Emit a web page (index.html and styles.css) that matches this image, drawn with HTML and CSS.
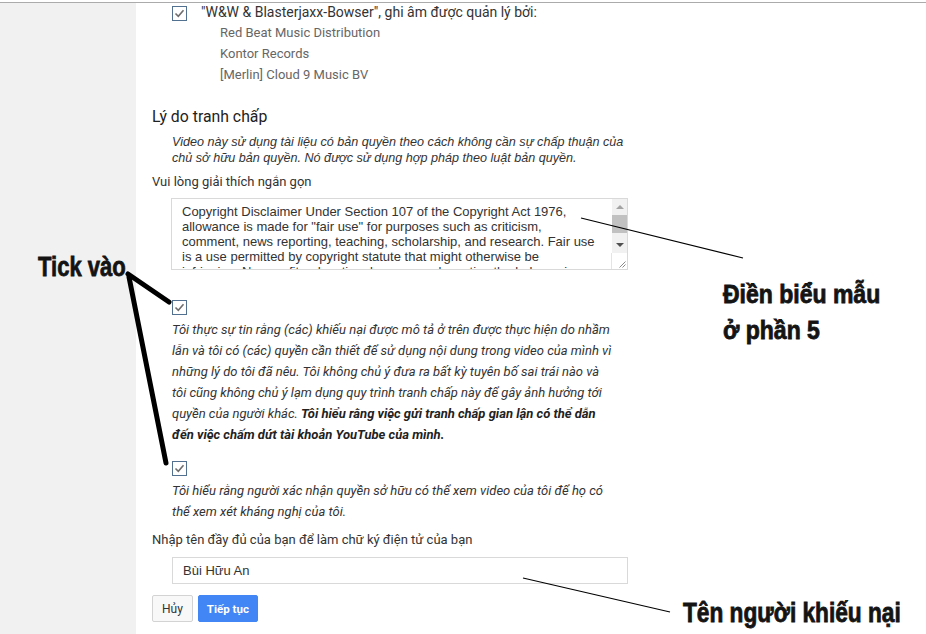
FILE: index.html
```html
<!DOCTYPE html>
<html lang="vi">
<head>
<meta charset="utf-8">
<title>Tranh chấp xác nhận quyền sở hữu</title>
<link rel="stylesheet" href="styles.css">
</head>
<body>
<div class="frame">
  <aside class="sidebar"></aside>
  <main class="content">
    <div class="claim">
      <span class="cb"><svg viewBox="0 0 15 15" width="15" height="15"><rect x="0.5" y="0.5" width="14" height="14" fill="#fff" stroke="#52708f"/><path d="M3.5 7.5 L6.3 10.3 L11.5 4.2" fill="none" stroke="#6e6e6e" stroke-width="1.6"/></svg></span>
      <p class="claim-title">"W&amp;W &amp; Blasterjaxx-Bowser", ghi âm được quản lý bởi:</p>
    </div>
    <ul class="owners">
      <li>Red Beat Music Distribution</li>
      <li>Kontor Records</li>
      <li>[Merlin] Cloud 9 Music BV</li>
    </ul>

    <h2 class="section-title">Lý do tranh chấp</h2>
    <p class="reason">Video này sử dụng tài liệu có bản quyền theo cách không cần sự chấp thuận của chủ sở hữu bản quyền. Nó được sử dụng hợp pháp theo luật bản quyền.</p>

    <label class="field-label">Vui lòng giải thích ngắn gọn</label>
    <div class="ta">
      <div class="ta-text">Copyright Disclaimer Under Section 107 of the Copyright Act 1976,<br>allowance is made for "fair use" for purposes such as criticism,<br>comment, news reporting, teaching, scholarship, and research. Fair use<br>is a use permitted by copyright statute that might otherwise be<br>infringing. Non-profit, educational or personal use tips the balance in</div>
      <div class="ta-bar">
        <span class="sb-btn"><span class="arrow-up"></span></span>
        <span class="sb-thumb"></span>
        <span class="sb-track"></span>
        <span class="sb-btn"><span class="arrow-down"></span></span>
        <span class="sb-corner"><svg viewBox="0 0 15 16" width="15" height="16"><path d="M13.5 8.5 L7.5 14.5 M13.5 11.5 L10.5 14.5" stroke="#8a8a8a" stroke-width="1" fill="none"/></svg></span>
      </div>
    </div>

    <div class="agree first">
      <span class="cb"><svg viewBox="0 0 15 15" width="15" height="15"><rect x="0.5" y="0.5" width="14" height="14" fill="#fff" stroke="#52708f"/><path d="M3.5 7.5 L6.3 10.3 L11.5 4.2" fill="none" stroke="#6e6e6e" stroke-width="1.6"/></svg></span>
      <p class="agree-text">Tôi thực sự tin rằng (các) khiếu nại được mô tả ở trên được thực hiện do nhầm lẫn và tôi có (các) quyền cần thiết để sử dụng nội dung trong video của mình vì những lý do tôi đã nêu. Tôi không chủ ý đưa ra bất kỳ tuyên bố sai trái nào và tôi cũng không chủ ý lạm dụng quy trình tranh chấp này để gây ảnh hưởng tới quyền của người khác. <strong>Tôi hiểu rằng việc gửi tranh chấp gian lận có thể dẫn đến việc chấm dứt tài khoản YouTube của mình.</strong></p>
    </div>

    <div class="agree second">
      <span class="cb"><svg viewBox="0 0 15 15" width="15" height="15"><rect x="0.5" y="0.5" width="14" height="14" fill="#fff" stroke="#52708f"/><path d="M3.5 7.5 L6.3 10.3 L11.5 4.2" fill="none" stroke="#6e6e6e" stroke-width="1.6"/></svg></span>
      <p class="agree-text">Tôi hiểu rằng người xác nhận quyền sở hữu có thể xem video của tôi để họ có thể xem xét kháng nghị của tôi.</p>
    </div>

    <label class="field-label sign">Nhập tên đầy đủ của bạn để làm chữ ký điện tử của bạn</label>
    <div class="name-input">Bùi Hữu An</div>

    <div class="actions">
      <button class="btn">Hủy</button>
      <button class="btn primary">Tiếp tục</button>
    </div>
  </main>
</div>

<div class="annotations">
  <svg class="marks" width="926" height="634" viewBox="0 0 926 634">
    <line x1="128" y1="274" x2="169" y2="302" stroke="#000" stroke-width="5" stroke-linecap="round"/>
    <line x1="129" y1="277" x2="166" y2="463" stroke="#000" stroke-width="5" stroke-linecap="round"/>
    <line x1="581" y1="218" x2="743" y2="258" stroke="#000" stroke-width="1.2"/>
    <line x1="523" y1="578" x2="670" y2="612" stroke="#000" stroke-width="1.2"/>
  </svg>
  <span class="note tick">Tick vào</span>
  <span class="note fill">Điền biểu mẫu<br>ở phần 5</span>
  <span class="note name">Tên người khiếu nại</span>
</div>
</body>
</html>
```

FILE: styles.css
```css
html, body {
  margin: 0;
  background: #fff;
}

body {
  position: relative;
  font-family: Roboto, "Liberation Sans", sans-serif;
  color: #333;
  overflow: hidden;
  height: 634px;
}

.frame {
  display: flex;
  margin-top: 2px;
  border-top: 1px solid #ababab;
  height: 631px;
}

.sidebar {
  width: 136px;
  flex: none;
  background: #f1f1f1;
}

.content {
  flex: 1;
  padding: 3px 0 0 16px;
  font-size: 13px;
}

.cb {
  display: block;
  width: 15px;
  height: 15px;
  flex: none;
}

.cb svg {
  display: block;
}

.claim {
  display: flex;
  gap: 14px;
  margin-left: 20px;
}

.claim-title {
  margin: -1px 0 0;
  font-size: 14px;
  line-height: 15px;
}

.owners {
  list-style: none;
  margin: 1px 0 0 68px;
  padding: 0;
  color: #666;
  line-height: 21px;
}

.section-title {
  margin: 22px 0 0;
  font-size: 15.8px;
  font-weight: normal;
  line-height: 20px;
  color: #222;
}

.reason {
  margin: 7px 0 0 20px;
  width: 458px;
  font: italic 12.6px/16px "Liberation Sans", Arial, sans-serif;
  color: #333;
}

.field-label {
  display: block;
  margin-top: 7px;
  line-height: 18px;
  color: #333;
}

.field-label.sign {
  margin-top: 9px;
}

.ta {
  display: flex;
  box-sizing: border-box;
  margin: 7px 0 0 19px;
  width: 457px;
  height: 72px;
  border: 1px solid #d9d9d9;
}

.ta-text {
  flex: 1;
  overflow: hidden;
  padding: 5px 0 0 10px;
  font: 13px/15px "Liberation Sans", Arial, sans-serif;
  color: #333;
  white-space: nowrap;
}

.ta-bar {
  width: 15px;
  flex: none;
  display: flex;
  flex-direction: column;
  background: #f1f1f1;
}

.sb-btn {
  height: 16px;
  display: flex;
  align-items: center;
  justify-content: center;
}

.arrow-up {
  width: 0;
  height: 0;
  border-left: 4px solid transparent;
  border-right: 4px solid transparent;
  border-bottom: 4px solid #a3a3a3;
}

.arrow-down {
  width: 0;
  height: 0;
  border-left: 4px solid transparent;
  border-right: 4px solid transparent;
  border-top: 4px solid #505050;
}

.sb-thumb {
  height: 18px;
  background: #c1c1c1;
}

.sb-track {
  flex: 1;
}

.sb-corner {
  height: 16px;
  background: #fff;
  border-left: 1px solid #e4e4e4;
  margin-left: -1px;
}

.sb-corner svg {
  display: block;
}

.agree {
  margin-left: 20px;
}

.agree.first {
  margin-top: 30px;
}

.agree.second {
  margin-top: 16px;
}

.agree-text {
  margin: 4px 0 0;
  width: 443px;
  font-style: italic;
  line-height: 21px;
  color: #333;
}

.agree-text strong {
  font-weight: bold;
  color: #222;
}

.name-input {
  box-sizing: border-box;
  margin: 8px 0 0 20px;
  width: 456px;
  height: 27px;
  border: 1px solid #d9d9d9;
  padding-left: 10px;
  font: 13px/25px "Liberation Sans", Arial, sans-serif;
  color: #333;
}

.actions {
  display: flex;
  gap: 5px;
  margin-top: 11px;
}

.btn {
  height: 27px;
  padding: 0 9px;
  border: 1px solid #d3d3d3;
  border-radius: 2px;
  background: #f8f8f8;
  color: #333;
  font: 12px Roboto, "Liberation Sans", sans-serif;
}

.btn.primary {
  padding: 0 8px;
  background: #4285f4;
  border-color: #4285f4;
  color: #fff;
  font-size: 11.5px;
  font-weight: bold;
}

.annotations {
  position: absolute;
  left: 0;
  top: 0;
  width: 926px;
  height: 634px;
  pointer-events: none;
}

.marks {
  position: absolute;
  left: 0;
  top: 0;
}

.note {
  position: absolute;
  font-family: "Liberation Sans", Arial, sans-serif;
  font-weight: bold;
  color: #141414;
  white-space: nowrap;
  transform-origin: left top;
  -webkit-text-stroke: 0.8px #141414;
}

.note.tick {
  left: 38px;
  top: 253px;
  font-size: 28px;
  line-height: 28px;
  transform: scaleX(0.786);
}

.note.fill {
  left: 723px;
  top: 276px;
  font-size: 25px;
  line-height: 36px;
  transform: scaleX(0.92);
}

.note.name {
  left: 683px;
  top: 600px;
  font-size: 27px;
  line-height: 27px;
  transform: scaleX(0.84);
}
```
